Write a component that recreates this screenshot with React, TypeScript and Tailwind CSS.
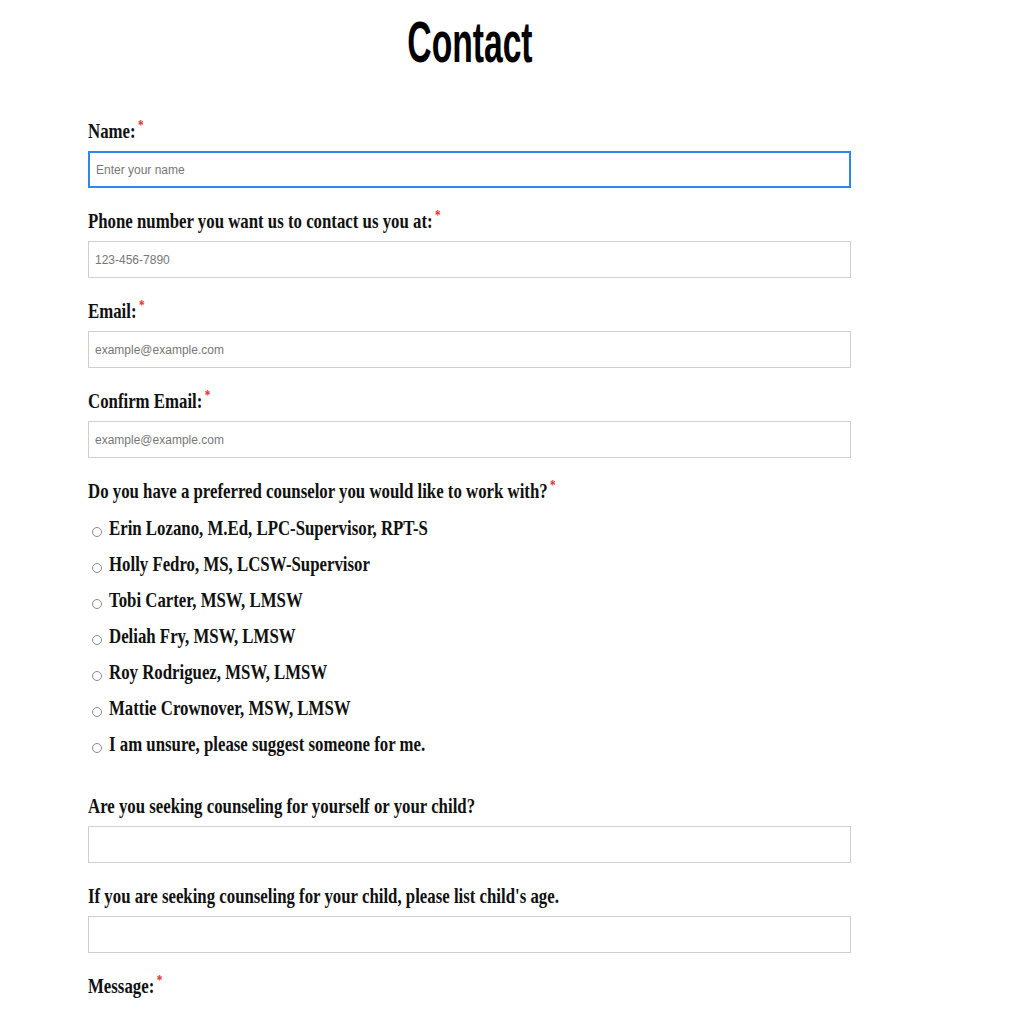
const counselors = [
  'Erin Lozano, M.Ed, LPC-Supervisor, RPT-S',
  'Holly Fedro, MS, LCSW-Supervisor',
  'Tobi Carter, MSW, LMSW',
  'Deliah Fry, MSW, LMSW',
  'Roy Rodriguez, MSW, LMSW',
  'Mattie Crownover, MSW, LMSW',
  'I am unsure, please suggest someone for me.',
]

const serif = { fontFamily: '"Liberation Serif", "Times New Roman", serif' }

function Label({ text, required }: { text: string; required?: boolean }) {
  return (
    <label className="block h-[24px] leading-[24px] text-[21px] font-bold text-[#111]" style={serif}>
      <span className="inline-block origin-left scale-x-[0.8] whitespace-nowrap">
        {text}
        {required && <span className="ml-[3px] align-top text-[14px] leading-none text-[#e0322d]">*</span>}
      </span>
    </label>
  )
}

function Field({ label, placeholder, required, focused }: { label: string; placeholder?: string; required?: boolean; focused?: boolean }) {
  return (
    <div className="flex flex-col">
      <Label text={label} required={required} />
      <input
        type="text"
        placeholder={placeholder}
        className={`mt-[8px] h-[37px] w-full bg-white px-[6px] text-[12px] text-[#333] outline-none placeholder:text-[#777] ${
          focused ? 'border-2 border-[#2f86eb]' : 'border border-[#cfcfcf]'
        }`}
        style={{ fontFamily: '"Liberation Sans", Arial, sans-serif' }}
      />
    </div>
  )
}

export default function App() {
  return (
    <div className="min-h-screen bg-white">
      <div className="ml-[88px] w-[763px] pt-[12px]">
        <h1
          className="h-[60px] text-center text-[58px] font-bold leading-[60px] text-black"
          style={{ fontFamily: '"Liberation Sans", Arial, sans-serif' }}
        >
          <span className="inline-block scale-x-[0.58]">Contact</span>
        </h1>

        <div className="mt-[47px] flex flex-col gap-[21px]">
          <Field label="Name:" placeholder="Enter your name" required focused />
          <Field label="Phone number you want us to contact us you at:" placeholder="123-456-7890" required />
          <Field label="Email:" placeholder="example@example.com" required />
          <Field label="Confirm Email:" placeholder="example@example.com" required />

          <div className="flex flex-col">
            <Label text="Do you have a preferred counselor you would like to work with?" required />
            <div className="mt-[8px] flex flex-col">
              {counselors.map((c) => (
                <label key={c} className="flex h-[36px] items-center text-[21px] font-bold text-[#111]" style={serif}>
                  <span className="mt-[6px] ml-[4px] mr-[7px] h-[10px] w-[10px] shrink-0 rounded-full border border-[#8a8a8a] bg-white" />
                  <span className="inline-block origin-left scale-x-[0.8] whitespace-nowrap">{c}</span>
                </label>
              ))}
            </div>
          </div>

          <div className="mt-[10px]">
            <Field label="Are you seeking counseling for yourself or your child?" />
          </div>
          <Field label="If you are seeking counseling for your child, please list child's age." />
          <Label text="Message:" required />
        </div>
      </div>
    </div>
  )
}
